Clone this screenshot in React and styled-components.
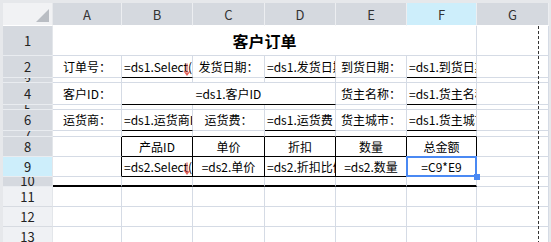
import React from "react";
import styled, { createGlobalStyle } from "styled-components";

const GlobalStyle = createGlobalStyle`
    html, body {
        margin: 0;
        padding: 0;
        background: #ffffff;
        overflow: hidden;
    }
    body {
        font-family: "Noto Sans CJK SC", "Noto Sans", sans-serif;
    }
`;

const GRID = "#d5dbe5";
const INK = "#000000";
const BLUE = "#4a89f3";

const Frame = styled.div`
    width: 551px;
    height: 242px;
    padding: 3px 0 0 3px;
    box-sizing: border-box;
    background: #e6e8eb;
    overflow: hidden;
`;

const Sheet = styled.div`
    position: relative;
    display: grid;
    grid-template-columns: 50px 69px 71px 72px 71px 71px 70px 72px 1fr;
    grid-template-rows: ${props => props.rows};
    background: #ffffff;
`;

const Corner = styled.div`
    position: relative;
    background: #f1f2f4;
    border-right: 1px solid #e7e9ec;
    border-bottom: 1px solid #ffffff;
    box-sizing: border-box;
    &::after {
        content: "";
        position: absolute;
        right: 3px;
        bottom: 3px;
        width: 0;
        height: 0;
        border-left: 13px solid transparent;
        border-bottom: 13px solid #b9bdc3;
    }
`;

const ColHeader = styled.div`
    display: flex;
    align-items: center;
    justify-content: center;
    background: ${props => (props.active ? "#cdeefb" : "#d5d9df")};
    border-right: 1px solid #eceef1;
    border-bottom: 1px solid #ffffff;
    box-sizing: border-box;
    font-size: 13px;
    color: #333;
`;

const Filler = styled.div`
    background: #e6e8eb;
`;

const RowHeader = styled.div`
    display: flex;
    justify-content: center;
    align-items: ${props => (props.short ? "flex-start" : "center")};
    overflow: hidden;
    background: ${props =>
        props.active ? "#cdeefb" : props.light ? "#eff1f4" : "#d5d9df"};
    border-bottom: 1px solid ${props => (props.light ? "#d7dbe1" : "#e9ecf0")};
    border-right: 1px solid #e3e6ea;
    box-sizing: border-box;
    font-size: 13px;
    color: #222;
    span {
        display: block;
        line-height: 18px;
        margin-top: ${props => (props.short ? "-5px" : "0")};
    }
`;

const Cell = styled.div`
    position: relative;
    grid-column: span ${props => props.span || 1};
    display: flex;
    align-items: center;
    min-width: 0;
    box-sizing: border-box;
    background: #ffffff;
    border-right: 1px solid ${props => props.right || GRID};
    border-bottom: ${props => (props.thick ? "2px" : "1px")} solid
        ${props => props.bottom || GRID};
    font-size: ${props => (props.title ? "16px" : "12px")};
    font-weight: ${props => (props.title ? 700 : 400)};
    color: ${INK};
`;

const Content = styled.div`
    width: 100%;
    padding: 0 2px;
    box-sizing: border-box;
    overflow: hidden;
    white-space: nowrap;
    text-align: ${props => props.align || "left"};
    line-height: 16px;
`;

const ArrowMark = styled.svg`
    position: absolute;
    right: 1px;
    bottom: 1px;
    width: 8px;
    height: 13px;
`;

const Selection = styled.div`
    position: absolute;
    top: -1px;
    left: -1px;
    right: -1px;
    bottom: -1px;
    border: 2px solid ${BLUE};
    z-index: 2;
    pointer-events: none;
    &::after {
        content: "";
        position: absolute;
        right: -5px;
        bottom: -5px;
        width: 6px;
        height: 6px;
        background: ${BLUE};
    }
`;

const PageBreak = styled.div`
    position: absolute;
    top: 23px;
    bottom: 0;
    left: 535px;
    width: 1px;
    z-index: 1;
    background: repeating-linear-gradient(
        to bottom,
        #333 0,
        #333 3px,
        transparent 3px,
        transparent 5px
    );
`;

const COLS = ["A", "B", "C", "D", "E", "F", "G"];

const label = text => ({ text, align: "center" });
const field = text => ({ text, bottom: INK });
const boxed = (text, extra = {}) => ({
    text,
    align: "center",
    right: INK,
    bottom: INK,
    ...extra
});
const tableTop = { bottom: INK };
const breakLine = { bottom: INK, thick: true };

const ROWS = [
    { n: 1, h: 30, cells: { A: { span: 6, text: "客户订单", title: true, align: "center" } } },
    {
        n: 2,
        h: 22,
        cells: {
            A: label("订单号："),
            B: { ...field("=ds1.Select(订单ID)"), arrow: true },
            C: label("发货日期："),
            D: field("=ds1.发货日期"),
            E: label("到货日期："),
            F: field("=ds1.到货日期")
        }
    },
    { n: 3, h: 5, short: true },
    {
        n: 4,
        h: 22,
        cells: {
            A: label("客户ID："),
            B: { span: 3, text: "=ds1.客户ID", align: "center", bottom: INK },
            E: label("货主名称："),
            F: field("=ds1.货主名称")
        }
    },
    { n: 5, h: 5, short: true },
    {
        n: 6,
        h: 21,
        cells: {
            A: label("运货商："),
            B: field("=ds1.运货商ID"),
            C: label("运货费："),
            D: field("=ds1.运货费"),
            E: label("货主城市："),
            F: field("=ds1.货主城市")
        }
    },
    {
        n: 7,
        h: 6,
        short: true,
        cells: { B: tableTop, C: tableTop, D: tableTop, E: tableTop, F: tableTop }
    },
    {
        n: 8,
        h: 20,
        cells: {
            A: { right: INK },
            B: boxed("产品ID"),
            C: boxed("单价"),
            D: boxed("折扣"),
            E: boxed("数量"),
            F: boxed("总金额")
        }
    },
    {
        n: 9,
        h: 20,
        active: true,
        cells: {
            A: { right: INK },
            B: boxed("=ds2.Select(产品ID)", { arrow: true }),
            C: boxed("=ds2.单价"),
            D: boxed("=ds2.折扣比例"),
            E: boxed("=ds2.数量"),
            F: boxed("=C9*E9", { selected: true })
        }
    },
    {
        n: 10,
        h: 10,
        short: true,
        cells: {
            A: breakLine,
            B: breakLine,
            C: breakLine,
            D: breakLine,
            E: breakLine,
            F: breakLine
        }
    },
    { n: 11, h: 20, light: true },
    { n: 12, h: 20, light: true },
    { n: 13, h: 20, light: true }
];

const DownArrow = () => (
    <ArrowMark viewBox="0 0 8 13">
        <path
            d="M4 0.5 L4 11.5 M1 8 L4 12 L7 8"
            stroke="#e0433a"
            strokeWidth="1.2"
            fill="none"
            opacity="0.85"
        />
    </ArrowMark>
);

const renderRow = row => {
    const out = [
        <RowHeader
            key={"h" + row.n}
            short={row.short}
            active={row.active}
            light={row.light}
        >
            <span>{row.n}</span>
        </RowHeader>
    ];
    const cells = row.cells || {};
    let skip = 0;
    COLS.forEach(col => {
        if (skip > 0) {
            skip--;
            return;
        }
        const spec = cells[col] || {};
        if (spec.span) skip = spec.span - 1;
        out.push(
            <Cell
                key={col + row.n}
                span={spec.span}
                right={spec.right}
                bottom={spec.bottom}
                thick={spec.thick}
                title={spec.title}
            >
                {spec.text ? <Content align={spec.align}>{spec.text}</Content> : null}
                {spec.arrow ? <DownArrow /> : null}
                {spec.selected ? <Selection /> : null}
            </Cell>
        );
    });
    out.push(<Filler key={"f" + row.n} />);
    return out;
};

const App = () => {
    const rowTemplate = "23px " + ROWS.map(r => r.h + "px").join(" ");
    return (
        <Frame>
            <GlobalStyle />
            <Sheet rows={rowTemplate}>
                <Corner />
                {COLS.map(col => (
                    <ColHeader key={col} active={col === "F"}>
                        {col}
                    </ColHeader>
                ))}
                <Filler />
                {ROWS.map(renderRow)}
                <PageBreak />
            </Sheet>
        </Frame>
    );
};

export default App;
